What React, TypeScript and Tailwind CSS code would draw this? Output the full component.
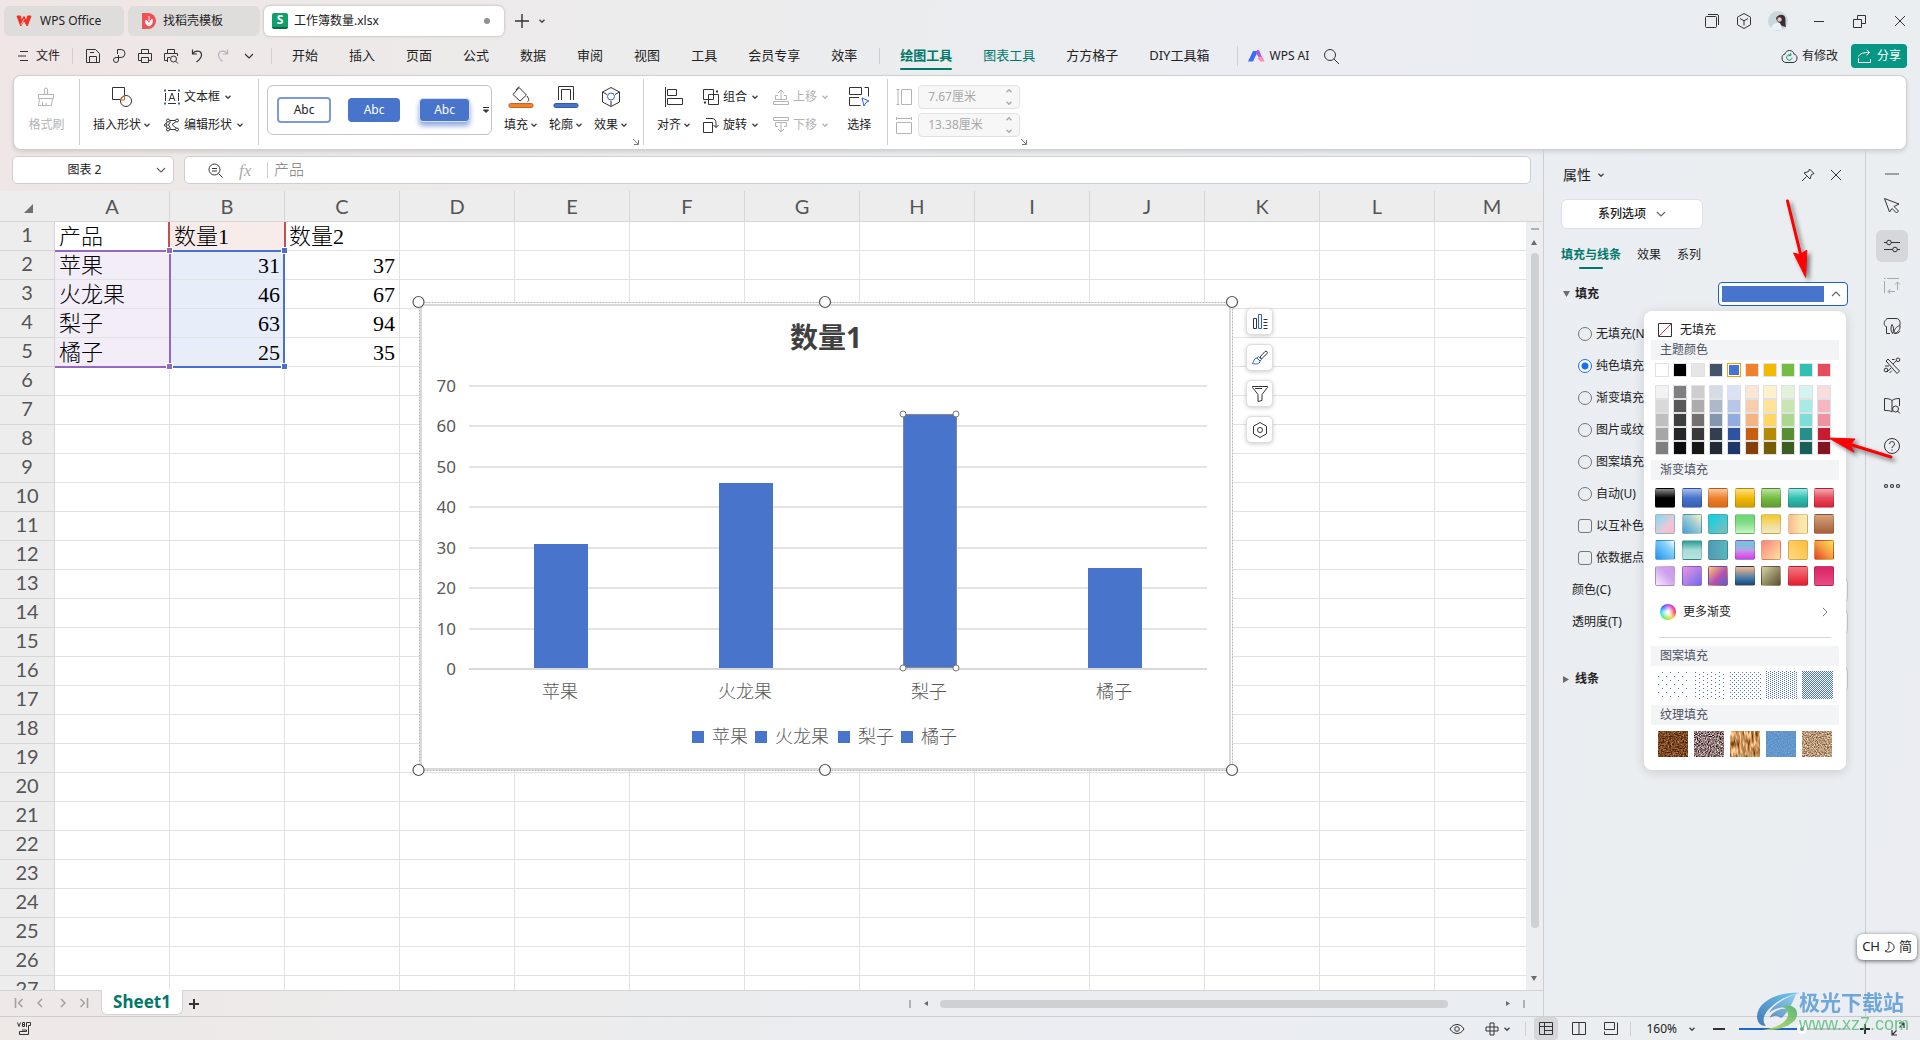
import React from "react";
import type { ReactNode } from "react";

const UI = "font-['Noto_Sans','Noto_Sans_CJK_SC',sans-serif]";

function Ico({ w = 20, h, c = "#333", s = 1, children }: { w?: number; h?: number; c?: string; s?: number; children: ReactNode }) {
  const hh = h ?? w;
  return (
    <svg width={w} height={hh} viewBox={`0 0 ${w} ${hh}`} fill="none" stroke={c} strokeWidth={s} strokeLinejoin="round" className="shrink-0" aria-hidden="true">
      {children}
    </svg>
  );
}

function Chev({ c = "#444", up = false }: { c?: string; up?: boolean }) {
  return (
    <Ico w={8} c={c} s={1.4}>
      <path d={up ? "M1.5 5.2L4 2.8l2.5 2.4" : "M1.5 2.8L4 5.2l2.5-2.4"} />
    </Ico>
  );
}

function BigChev({ c = "#666", up = false }: { c?: string; up?: boolean }) {
  return (
    <Ico w={10} c={c} s={1.1}>
      <path d={up ? "M1 7l4-4 4 4" : "M1 3l4 4 4-4"} />
    </Ico>
  );
}

function VLine({ h = "h-4" }: { h?: string }) {
  return <span className={`w-px shrink-0 bg-[#cfcfd3] ${h}`} />;
}

/* ---------- title bar ---------- */

function TitleBar() {
  return (
    <header className="flex h-10 items-center pl-1 pt-0.5 text-xs">
      <button className="flex h-[30px] w-[120px] items-center gap-2 rounded-md bg-[#dfdcdc] pl-3">
        <svg width="16" height="12" viewBox="0 0 16 12" aria-hidden="true">
          <path d="M1 1h3.500L5.500 6 8 1.500 10.500 6l1-5H15l-3.800 10L8 5.500 4.800 11z" fill="#f3301f" stroke="#f3301f" strokeLinejoin="round" />
          <path d="M8 4.200L5.200 9.500" stroke="#fff" strokeWidth=".8" />
        </svg>
        WPS Office
      </button>
      <button className="ml-1 flex h-[30px] w-[132px] items-center gap-[7px] rounded-md bg-[#dfdcdc] pl-3.5">
        <svg width="14" height="16" viewBox="0 0 14 16" aria-hidden="true">
          <path d="M0 0h6a8 8 0 010 16H0z" fill="#ee5258" />
          <path d="M7 13c-3-1-4-3-3-6 2 1 3 3 3 6zm0 0c3-1 4-4 3-7-2 2-3 4-3 7zM7 8V3" fill="#fff" stroke="#fff" strokeWidth=".8" />
        </svg>
        找稻壳模板
      </button>
      <button className="ml-1 flex h-[30px] w-[240px] items-center rounded-md bg-white pl-2 shadow-[0_0_3px_rgba(0,0,0,0.28)]">
        <span className="mr-1.5 flex size-4 items-center justify-center rounded-[2px] border-b-2 border-[#0b6b45] bg-[#11a06b] text-xs leading-none font-bold text-white">S</span>
        <span>工作簿数量.xlsx</span>
        <span className="mr-3.5 ml-auto size-1.5 rounded-full bg-[#909090]" />
      </button>
      <button aria-label="新建" className="ml-2.5">
        <Ico w={16} s={1.4}><path d="M8 1v14M1 8h14" /></Ico>
      </button>
      <button aria-label="标签列表" className="ml-2"><Chev /></button>
      <div className="mr-3.5 ml-auto flex items-center">
        <button aria-label="窗口" className="mr-[15px]">
          <Ico w={16}><rect x="1.5" y="3.5" width="11" height="11" rx="1" /><path d="M4 1.5h9a1.5 1.5 0 011.500 1.500v9" /></Ico>
        </button>
        <button aria-label="工作台" className="mr-[15px]">
          <Ico w={18}><path d="M9 1.500l6.500 3.700v7.600L9 16.500l-6.500-3.700V5.200zM5 6.500l4 2.300 4-2.300M9 8.800v4.700" /></Ico>
        </button>
        <svg width="20" height="20" viewBox="0 0 20 20" className="mr-[25px]" aria-hidden="true">
          <circle cx="10" cy="10" r="10" fill="#cbd7dd" />
          <path d="M8 8c0-4 7-6 9-2 1 3 0 6 1 10l-4-1-4-4z" fill="#3c2b33" />
          <circle cx="11.500" cy="8.500" r="2.200" fill="#e6c4b8" />
          <path d="M3 19c0-5 4-8 9-7l2 7z" fill="#e9f2f6" />
        </svg>
        <button aria-label="最小化" className="mr-7"><Ico w={12}><path d="M1 6.500h10" /></Ico></button>
        <button aria-label="还原" className="mr-7">
          <Ico w={13}><rect x=".5" y="4.500" width="8" height="8" /><path d="M4.500 4V.5h8v8H9" /></Ico>
        </button>
        <button aria-label="关闭"><Ico w={12}><path d="M1 1l10 10M11 1L1 11" /></Ico></button>
      </div>
    </header>
  );
}

/* ---------- menu bar ---------- */

const MENUS = ["开始", "插入", "页面", "公式", "数据", "审阅", "视图", "工具", "会员专享", "效率"];

function MenuBar() {
  return (
    <nav className="mb-[3px] flex h-8 items-center pl-[18px] text-[13px] whitespace-nowrap">
      <button className="flex items-center gap-2 text-xs">
        <Ico w={10} h={12}><path d="M2 1.500h8M0 6h8M2 10.500h8" /></Ico>
        文件
      </button>
      <span className="mr-3 ml-3"><VLine h="block h-4" /></span>
      <div className="flex items-center gap-2.5">
        <button aria-label="保存"><Ico w={16}><path d="M1.500 1.500h9l4 4v9h-13zM4.500 14V8.500h7V14M5 4.500h4" /></Ico></button>
        <button aria-label="输出为PDF"><Ico w={16}><path d="M6.500 6V1.500H10a4 4 0 010 8H5a2.500 2.500 0 102.500 2.500V7" /></Ico></button>
        <button aria-label="打印"><Ico w={16}><path d="M4.500 5V1.500h7V5M4 12.500H1.500V5.500h13v7H12" /><rect x="4.500" y="9.500" width="7" height="5" /></Ico></button>
        <button aria-label="打印预览"><Ico w={16}><path d="M4.500 5V1.500h7V5M4 12.500H1.500V5.500h13V8M4.500 14V9.500H7" /><circle cx="10.500" cy="11" r="3" /><path d="M12.800 13.200l2.200 2.300" /></Ico></button>
        <button aria-label="撤销"><Ico w={16} s={1.2}><path d="M3.500 1.500v4.500h4.500M3.800 5.800C6 2 12.500 2 12.500 7c0 3-2.500 5-5 7" /></Ico></button>
        <button aria-label="恢复"><Ico w={16} c="#b5b5b8" s={1.2}><path d="M12.500 1.500v4.500H8M12.200 5.800C10 2 3.500 2 3.500 7c0 3 2 4.500 4 6.500" /></Ico></button>
        <button aria-label="更多命令" className="ml-[3px]"><BigChev c="#333" /></button>
      </div>
      <span className="mr-5 ml-[17px]"><VLine h="block h-4" /></span>
      <div className="flex gap-[31px]">
        {MENUS.map((m) => <button key={m}>{m}</button>)}
      </div>
      <span className="mr-5 ml-[22px]"><VLine h="block h-4" /></span>
      <div className="flex items-center gap-[31px]">
        <button className="relative h-7 font-bold text-[#00786a]">
          绘图工具
          <span className="absolute inset-x-0 bottom-0 h-0.5 rounded bg-[#00786a]" />
        </button>
        <button className="text-[#00786a]">图表工具</button>
        <button>方方格子</button>
        <button>DIY工具箱</button>
      </div>
      <span className="mr-2.5 ml-7"><VLine h="block h-5" /></span>
      <button className="flex items-center gap-1 text-xs">
        <svg width="17" height="12" viewBox="0 0 17 12" aria-hidden="true">
          <path d="M5 1h5L5 11.500H0z" fill="#3d6cf5" />
          <path d="M9 0h2l3 7h-3.500L8 3z" fill="#a15cf0" />
          <path d="M9.500 8.500l2-2 3.500 1 1.500 4h-4z" fill="#ff8fb4" />
        </svg>
        WPS AI
      </button>
      <button aria-label="搜索" className="ml-3.5"><Ico w={17}><circle cx="7" cy="7" r="5.500" /><path d="M11 11l5 5" /></Ico></button>
      <div className="mr-[13px] ml-auto flex items-center text-xs">
        <button className="mr-[13px] flex items-center gap-1">
          <Ico w={17} h={15}><path d="M8.500 1.500c2.500 0 4 1.500 4.500 3.500 2 .6 3 2 3 4 0 2.500-1.500 4.500-4 4.500H5c-2.500 0-4-2-4-4.500 0-2 1-3.400 3-4 .5-2 2-3.500 4.500-3.500z" /><path d="M11 8.500a2.700 2.700 0 11-1.500-2.400M9.500 4l.5 2.300-2.300.6" stroke="#0a9a6d" /></Ico>
          有修改
        </button>
        <button className="flex h-6 items-center gap-[5px] rounded bg-[#069684] px-1.5 text-white">
          <Ico w={15} h={14} c="#fff"><path d="M1.500 9v4.500h12V10M1.500 7.500C3 4 7 3.500 12.500 3.500M9.500.8l3.200 2.700-3.200 2.700" /></Ico>
          分享
        </button>
      </div>
    </nav>
  );
}

/* ---------- ribbon ---------- */

function Big({ icon, text, arrow = true, dim = false }: { icon: ReactNode; text: string; arrow?: boolean; dim?: boolean }) {
  return (
    <button className={`flex flex-col items-center ${dim ? "text-[#b4b4b4]" : ""}`}>
      <span className="flex h-7 items-center">{icon}</span>
      <span className="flex h-7 items-center gap-0.5">{text}{arrow && <Chev />}</span>
    </button>
  );
}

function Small({ icon, text, dim = false }: { icon: ReactNode; text: string; dim?: boolean }) {
  return (
    <button className={`flex h-7 items-center gap-1 ${dim ? "text-[#b4b4b4]" : ""}`}>
      {icon}{text}<Chev c={dim ? "#b4b4b4" : "#444"} />
    </button>
  );
}

function Launcher() {
  return (
    <button aria-label="更多选项" className="mb-1 self-end">
      <Ico w={7} c="#777"><path d="M1 1l5 5M6.500 2v4.500H2" /></Ico>
    </button>
  );
}

function SizeInput({ label, value, icon }: { label: string; value: string; icon: ReactNode }) {
  return (
    <label className="flex h-7 items-center gap-[5px]">
      {icon}
      <span className="flex h-6 w-[102px] items-center rounded border border-[#e2e2e2] bg-[#f7f7f7] pr-1.5 pl-[9px]">
        <input aria-label={label} disabled defaultValue={value} className="w-full min-w-0 text-[#a8a8a8]" />
        <span className="flex flex-col gap-1">
          <Chev c="#aaa" up />
          <Chev c="#aaa" />
        </span>
      </span>
    </label>
  );
}

function Ribbon() {
  const g = "#b4b4b4";
  return (
    <section className="mx-[13px] flex h-[75px] shrink-0 rounded-lg border border-[#cfd0d3] bg-white pt-[7px] text-xs whitespace-nowrap shadow-[0_2px_4px_rgba(0,0,0,0.12)]">
      <div className="flex w-[65px] justify-center">
        <Big dim arrow={false} text="格式刷" icon={<Ico w={20} c={g}><path d="M8.500 7.500V2.500a1.500 1.500 0 013 0v5M2.500 7.500h15v4h-15zM3.500 11.500l-1 7h13l1-7M6.500 18v-3M10 18v-2" /></Ico>} />
      </div>
      <VLine h="-mt-1 h-[66px]" />
      <div className="flex pr-3.5 pl-[13px]">
        <Big text="插入形状" icon={<Ico w={22}><circle cx="15" cy="15" r="5.500" /><path d="M9 13.500H1.500v-12h12V9" /><path d="M9.500 14a5 5 0 014-4v4z" stroke="#d2622a" /></Ico>} />
        <div className="ml-[13px]">
          <Small text="文本框" icon={<Ico w={16}><path d="M4 1.500h8M4 14.500h8M1.500 4v8M14.500 4v8M5 12l3-8 3 8M6 9.500h4" /><path d="M0 1.500h2M0 14.500h2M14 1.500h2M14 14.500h2" stroke="#2f5fe0" strokeWidth="2" /></Ico>} />
          <Small text="编辑形状" icon={<Ico w={16}><path d="M13 4L8 7.500 13 12M4 3.500h7M4 12.500h7M3 5L1.500 8 3 11M6.500 4.500L4.500 8l2 3.500" /><circle cx="4" cy="3.500" r="1.500" fill="#fff" /><circle cx="13" cy="3.500" r="1.500" fill="#fff" /><circle cx="4" cy="12.500" r="1.500" fill="#fff" /><circle cx="13" cy="12.500" r="1.500" fill="#fff" /><circle cx="1.800" cy="8" r="1.300" fill="#fff" /></Ico>} />
        </div>
      </div>
      <VLine h="-mt-1 h-[66px]" />
      <div className="ml-2 mt-0.5 flex h-[50px] w-[225px] items-center rounded-md border border-[#c4c4c4] pl-[9px]">
        <button className="h-[26px] w-[54px] rounded border-2 border-[#7b9ade]">Abc</button>
        <button className="ml-[17px] h-6 w-[52px] rounded bg-[#4874cb] text-white">Abc</button>
        <button className="ml-[19px] h-6 w-[51px] rounded border border-[#d6e0f5] bg-[#4874cb] text-white shadow-[0_4px_5px_rgba(72,116,203,0.6)]">Abc</button>
        <button aria-label="更多样式" className="ml-3"><Ico w={8}><path d="M1 1.500h6" /><path d="M1.500 4h5L4 6.500z" fill="#333" /></Ico></button>
      </div>
      <div className="ml-3 flex gap-[11px]">
        <Big text="填充" icon={<Ico w={26} h={24}><path d="M11 2.500l7.500 7.500-6.500 6-7-6.500zM8 5l3-3.500M19 11c2 3 2.500 5 .5 5.500" /><rect x="1" y="18.500" width="24" height="4" rx="1.500" fill="#ee822f" stroke="#c8631a" /></Ico>} />
        <Big text="轮廓" icon={<Ico w={26} h={24}><path d="M5.500 15V1.500h15V15M8.500 15V4.500h9V15" /><rect x="1" y="18.500" width="24" height="4" rx="1.500" fill="#4874cb" stroke="#34599f" /></Ico>} />
        <Big text="效果" icon={<Ico w={22}><path d="M11 1.500L19.500 6v10L11 20.500 2.500 16V6zM2.500 6l4.500 2.500M19.500 6L15 8.500M11 20v-5" /><circle cx="11" cy="10.500" r="3.500" stroke="#2f5fe0" /></Ico>} />
      </div>
      <span className="ml-1 flex"><Launcher /></span>
      <VLine h="-mt-1 ml-1 h-[66px]" />
      <div className="flex pr-[16px] pl-[13px]">
        <Big text="对齐" icon={<Ico w={20}><path d="M1.500 0v20M3.500 2.500h9v6h-9zM3.500 11.500h15v6h-15z" /></Ico>} />
        <div className="ml-3">
          <Small text="组合" icon={<Ico w={16}><rect x=".5" y=".5" width="10" height="10" /><rect x="5.500" y="5.500" width="10" height="10" /><path d="M13 2.500h2M1 13.500h2" strokeWidth="2" /></Ico>} />
          <Small text="旋转" icon={<Ico w={16}><rect x=".5" y="5.500" width="9" height="10" /><path d="M3 1.500h6c3 0 4 2 4 5v4M10.500 8l2.500 2.500L15.500 8" /></Ico>} />
        </div>
        <div className="ml-3.5">
          <Small dim text="上移" icon={<Ico w={16} c={g}><path d="M8 1v9M5 4l3-3 3 3M5 6.500H2.500v4h11v-4H11M.5 12.500h15v3H.5z" /></Ico>} />
          <Small dim text="下移" icon={<Ico w={16} c={g}><path d="M8 15V6M5 12l3 3 3-3M5 9.500H2.500v-4h11v4H11M.5.5h15v3H.5z" /></Ico>} />
        </div>
        <div className="ml-[18px]">
          <Big arrow={false} text="选择" icon={<Ico w={22}><path d="M1.500 1.500h12v7h-12zM1.500 11.500h9M1.500 11.500v8h11M1.500 11.500H11M16.500 1.500h4v9" /><path d="M14 12l7 3-3 1.500-2 3.500z" stroke="#2f5fe0" /></Ico>} />
        </div>
      </div>
      <VLine h="-mt-1 h-[66px]" />
      <div className="ml-2">
        <SizeInput label="高度" value="7.67厘米" icon={<Ico w={17} h={18} c={g}><rect x="5.500" y="1.500" width="10" height="15" /><path d="M2 1.500v15M.5 1.500h3M.5 16.500h3" /></Ico>} />
        <SizeInput label="宽度" value="13.38厘米" icon={<Ico w={17} h={18} c={g}><rect x=".5" y="6.500" width="15" height="11" /><path d="M.5 2.500h15M.5 1v3M15.500 1v3" /></Ico>} />
      </div>
      <Launcher />
    </section>
  );
}

/* ---------- formula bar ---------- */

function FormulaBar() {
  return (
    <div className="flex h-[41px] shrink-0 gap-2.5 pt-1.5 pr-3 pb-[7px] pl-3 text-xs">
      <div className="flex w-[162px] items-center rounded-[5px] border border-[#cfcfd1] bg-white pr-[7px]">
        <input aria-label="名称框" defaultValue="图表 2" className="w-full min-w-0 text-center" />
        <BigChev />
      </div>
      <div className="flex flex-1 items-center rounded-[5px] border border-[#cfcfd1] bg-white pl-[23px]">
        <Ico w={15}><circle cx="6.500" cy="6.500" r="5.500" /><path d="M10.500 10.500l4 4M4 5.500h5M4 8h5" /></Ico>
        <span className="ml-4 w-4 font-['Liberation_Serif',serif] text-[17px] leading-none text-[#aaa] italic">fx</span>
        <span className="mr-1.5 ml-3 h-4 w-px bg-[#cfcfcf]" />
        <input aria-label="编辑栏" defaultValue="产品" className="flex-1 pb-1 text-[15px] leading-none font-light text-[#777]" />
      </div>
    </div>
  );
}

/* ---------- sheet ---------- */

const COLS = "ABCDEFGHIJKLM".split("");
const CELLS: Record<number, string[]> = {
  1: ["产品", "数量1", "数量2"],
  2: ["苹果", "31", "37"],
  3: ["火龙果", "46", "67"],
  4: ["梨子", "63", "94"],
  5: ["橘子", "25", "35"],
};

function cellClass(r: number, c: number) {
  let k = "h-[29px] border-r border-b border-[#e2e2e2] px-1 pt-0.5 pb-0 leading-[26px] font-light whitespace-nowrap ";
  if (r > 1 && c > 0) k += "text-right ";
  if (c === 0 && r > 1 && r < 6) k += "bg-[#f3edf8]";
  else if (c === 1 && r > 1 && r < 6) k += "bg-[#e8edfa]";
  else if (c === 1 && r === 1) k += "bg-[#f8eceb]";
  return k;
}

function Handle({ cls }: { cls: string }) {
  return <span className={`absolute size-[7px] border border-white ${cls}`} />;
}

function Sheet() {
  return (
    <div className="relative min-w-0 flex-1 overflow-hidden bg-white">
      <table className="w-[1550px] table-fixed border-separate border-spacing-0">
        <colgroup>
          <col className="w-[55px]" />
          {COLS.map((c) => <col key={c} className="w-[115px]" />)}
        </colgroup>
        <thead>
          <tr className="bg-[#ededee] font-['Lato',sans-serif] text-xl text-[#555]">
            <th className="h-[31px] border-b border-[#d6d6d6] p-0">
              <svg width="9" height="9" className="mt-1 ml-6" aria-hidden="true"><path d="M9 0v9H0z" fill="#707070" /></svg>
            </th>
            {COLS.map((c) => (
              <th key={c} className="h-[31px] border-r border-b border-[#d6d6d6] p-0 font-normal">{c}</th>
            ))}
          </tr>
        </thead>
        <tbody>
          {Array.from({ length: 27 }, (_, i) => i + 1).map((r) => (
            <tr key={r} className="font-['Liberation_Serif','Noto_Sans_CJK_SC',serif] text-[22px] text-black">
              <th className="h-[29px] border-r border-b border-[#d6d6d6] bg-[#ededee] p-0 align-top font-['Lato',sans-serif] text-xl leading-6 font-normal text-[#555]">{r}</th>
              {COLS.map((c, ci) => (
                <td key={c} className={cellClass(r, ci)}>{CELLS[r]?.[ci] ?? ""}</td>
              ))}
            </tr>
          ))}
        </tbody>
      </table>
      <div className="absolute top-[31px] left-[168px] h-7 w-[118px] border-x-2 border-[#c4504f]" />
      <div className="absolute top-[59px] left-[169px] h-[118px] w-[116px] border-2 border-[#4a6fd0]" />
      <div className="absolute top-[59px] left-[55px] h-[118px] w-[116px] border-2 border-l-0 border-[#9467c0]" />
      <Handle cls="top-[56px] left-[166px] bg-[#9467c0]" />
      <Handle cls="top-[172px] left-[166px] bg-[#9467c0]" />
      <Handle cls="top-[56px] left-[281px] bg-[#4a6fd0]" />
      <Handle cls="top-[172px] left-[281px] bg-[#4a6fd0]" />
      <div className="absolute top-[103px] left-[412px]"><Chart /></div>
      <ChartButtons />
    </div>
  );
}

const BARS = [
  { name: "苹果", v: 31 },
  { name: "火龙果", v: 46 },
  { name: "梨子", v: 63 },
  { name: "橘子", v: 25 },
];
const LEGEND_X = [280, 343, 426, 489];
const BASE = 375;
const yOf = (v: number) => Math.round(BASE - (v * 283) / 70);

function Chart() {
  return (
    <svg width="828" height="484" viewBox="0 0 828 484" className="block font-['Noto_Sans','Noto_Sans_CJK_SC',sans-serif]" role="img" aria-label="数量1">
      <rect x="7.500" y="8.500" width="813" height="468" fill="#fff" stroke="#b8b8b8" strokeDasharray="2 1" />
      <rect x="9" y="11" width="809" height="464" fill="#fff" stroke="#d9d9d9" strokeWidth="2" />
      <text x="414" y="54" textAnchor="middle" fontSize="28" fontWeight="700" fill="#404040">数量1</text>
      {[0, 10, 20, 30, 40, 50, 60, 70].map((t) => (
        <g key={t}>
          <rect x="57" y={yOf(t) - 1} width="738" height="2" fill={t === 0 ? "#d9d9d9" : "#e4e4e4"} />
          <text x="44" y={yOf(t) + 6} textAnchor="end" fontSize="17" fill="#595959">{t}</text>
        </g>
      ))}
      {BARS.map((b, i) => {
        const cx = 149 + Math.round(i * 184.5);
        return (
          <g key={b.name}>
            <rect x={cx - 27} y={yOf(b.v)} width="54" height={BASE - 1 - yOf(b.v)} fill="#4874cb" />
            <text x={cx - 1} y={BASE + 29} textAnchor="middle" fontSize="18" fontWeight="300" fill="#595959">{b.name}</text>
            <rect x={LEGEND_X[i]} y="437" width="12" height="12" fill="#4874cb" />
            <text x={LEGEND_X[i] + 20} y="449" fontSize="18" fontWeight="300" fill="#595959">{b.name}</text>
          </g>
        );
      })}
      <rect x="491.500" y="120.500" width="53" height="253" fill="none" stroke="#7f8799" />
      {[[491, 120], [544, 120], [491, 374], [544, 374]].map(([x, y]) => (
        <circle key={`${x}-${y}`} cx={x} cy={y} r="3" fill="#fff" stroke="#777" />
      ))}
      {[[6.500, 8], [413, 8], [820, 8], [6.500, 476], [413, 476], [820, 476]].map(([x, y]) => (
        <circle key={`${x}-${y}`} cx={x} cy={y} r="5.500" fill="#fff" stroke="#555" strokeWidth="1.200" />
      ))}
    </svg>
  );
}

function ChartButtons() {
  const k = "flex size-[27px] items-center justify-center rounded-[5px] border border-[#dedede] bg-white shadow-[0_1px_4px_rgba(0,0,0,0.2)]";
  return (
    <div className="absolute top-[117px] left-[1246px] flex flex-col gap-[9px]">
      <button aria-label="图表元素" className={k}><Ico w={16}><path d="M1.500 4.500h3v10h-3z" /><path d="M6.500.5h3v14h-3z" stroke="#2f5fe0" /><path d="M11.500 5.500h4M11.500 8.500h4M11.500 11.500h4M11.500 14.500h4" /></Ico></button>
      <button aria-label="图表样式" className={k}><Ico w={16}><path d="M8 7l5-5.500c1.500-1 3 .5 2 2L9.500 9z" /><path d="M6.500 6.500l3 3-1.500 1.500-3-3zM5 8c-3 0-3 3-4.500 5.500C4 14.500 8 14 8 11" stroke="#2f5fe0" /></Ico></button>
      <button aria-label="图表筛选" className={k}><Ico w={16}><path d="M.5.5h15v1L10 8.500v6l-4 1v-7L.5 1.500zM3 2.500h7" /></Ico></button>
      <button aria-label="设置" className={k}><Ico w={16}><path d="M8 .5l6.500 3.700v7.600L8 15.500l-6.500-3.700V4.200z" /><circle cx="8" cy="8" r="2.500" /></Ico></button>
    </div>
  );
}

function Tri({ d }: { d: string }) {
  return <svg width="7" height="7" viewBox="0 0 7 7" className="shrink-0" aria-hidden="true"><path d={d} fill="#6b6b6b" /></svg>;
}

function VScroll() {
  return (
    <div className="flex w-[17px] shrink-0 flex-col items-center bg-[#edeef0] pb-2">
      <span className="h-[31px] w-full border-b border-[#d6d6d6] bg-[#ededee]" />
      <span className="mt-1.5 h-0.5 w-2 bg-[#b0b1b4]" />
      <span className="mt-[9px]"><Tri d="M0 6h6L3 1z" /></span>
      <span className="mt-[7px] mb-[47px] w-2 flex-1 rounded-full bg-[#cfd0d3]" />
      <Tri d="M0 1h6L3 6z" />
    </div>
  );
}

function SheetTabs() {
  const c = "#a2a2a5";
  return (
    <div className="flex h-[26px] shrink-0 border-t border-[#d3d4d7]">
      <div className="flex items-center gap-[11px] pr-3 pb-px pl-3.5">
        <button aria-label="第一张"><Ico w={10} c={c} s={1.6}><path d="M1.500 0v10M8.500 1L4.500 5l4 4" /></Ico></button>
        <button aria-label="上一张"><Ico w={10} c={c} s={1.6}><path d="M7 1L3 5l4 4" /></Ico></button>
        <button aria-label="下一张" className="ml-0.5"><Ico w={10} c={c} s={1.6}><path d="M3 1l4 4-4 4" /></Ico></button>
        <button aria-label="最后一张"><Ico w={10} c={c} s={1.6}><path d="M1.500 1l4 4-4 4M8.500 0v10" /></Ico></button>
      </div>
      <button className="-mt-px h-[25px] w-[82px] rounded-b-md border border-t-0 border-[#d3d4d7] bg-white text-[17px] leading-6 font-bold text-[#00786a]">Sheet1</button>
      <button aria-label="新建工作表" className="ml-1.5"><Ico w={10} s={2}><path d="M5 0v10M0 5h10" /></Ico></button>
      <div className="ml-auto flex w-[634px] items-center">
        <span className="h-2 w-0.5 bg-[#b0b1b4]" />
        <span className="ml-3"><Tri d="M5 1v5L1 3.500z" /></span>
        <span className="ml-2.5 h-2 w-[508px] rounded-full bg-[#cfd0d3]" />
        <span className="ml-auto"><Tri d="M2 1v5l4-2.500z" /></span>
        <span className="mr-[18px] ml-3 h-2 w-0.5 bg-[#b0b1b4]" />
      </div>
    </div>
  );
}

/* ---------- fill popup ---------- */

const THEME = ["bg-white", "bg-black", "bg-[#e6e6e6]", "bg-[#44546a]", "bg-[#4874cb]", "bg-[#ee822f]", "bg-[#f2ba02]", "bg-[#75bd42]", "bg-[#30c0b4]", "bg-[#e54c5e]"];
const TINTS = [
  ["bg-[#f2f2f2]", "bg-[#7f7f7f]", "bg-[#cfcdcd]", "bg-[#d6dce5]", "bg-[#dae3f5]", "bg-[#fce6d5]", "bg-[#fff1cb]", "bg-[#e3f2d9]", "bg-[#d3f4f1]", "bg-[#fadbdf]"],
  ["bg-[#d9d9d9]", "bg-[#595959]", "bg-[#aeabab]", "bg-[#adb9ca]", "bg-[#b6c7ea]", "bg-[#f8cdac]", "bg-[#fee398]", "bg-[#c8e5b3]", "bg-[#a8eae4]", "bg-[#f5b7bf]"],
  ["bg-[#bfbfbf]", "bg-[#3f3f3f]", "bg-[#757070]", "bg-[#8497b0]", "bg-[#91ace0]", "bg-[#f5b482]", "bg-[#fed664]", "bg-[#acd78e]", "bg-[#7cdfd7]", "bg-[#ef949e]"],
  ["bg-[#a6a6a6]", "bg-[#262626]", "bg-[#3a3838]", "bg-[#333f50]", "bg-[#2e54a1]", "bg-[#c65f10]", "bg-[#b58b02]", "bg-[#588e32]", "bg-[#249087]", "bg-[#c81d31]"],
  ["bg-[#7f7f7f]", "bg-[#0d0d0d]", "bg-[#171616]", "bg-[#222a35]", "bg-[#1f386b]", "bg-[#843f0b]", "bg-[#795d01]", "bg-[#3a5f21]", "bg-[#18605a]", "bg-[#851321]"],
];
const GRADS = [
  "bg-[linear-gradient(#8c8c8c,#000_50%)]", "bg-[linear-gradient(#a9bde8,#4874cb_50%,#345fb5)]", "bg-[linear-gradient(#f9c79f,#ee822f_50%,#db6710)]", "bg-[linear-gradient(#fbe08a,#f2ba02_50%,#cf9f00)]", "bg-[linear-gradient(#bce2a1,#75bd42_50%,#5f9c34)]", "bg-[linear-gradient(#a5e9e3,#30c0b4_50%,#259a90)]", "bg-[linear-gradient(#f3a8b1,#e54c5e_50%,#dc1f36)]",
  "bg-[linear-gradient(135deg,#78e0f2,#e9c8da_60%,#ffb8c8)]", "bg-[linear-gradient(45deg,#3f9fe0,#a5cfd0_60%,#fff0c0)]", "bg-[linear-gradient(135deg,#00d4ee,#8fb9b0)]", "bg-[linear-gradient(#6fd474,#7ddc82_40%,#c9f5c4)]", "bg-[linear-gradient(#f6c922,#f2de9a_60%,#efe9c4)]", "bg-[linear-gradient(90deg,#fdba90,#f9e3a8_60%,#f8f0a8)]", "bg-[linear-gradient(#d6a37f,#a5603a)]",
  "bg-[linear-gradient(45deg,#1d93f0,#8ed4f8_70%,#fff)]", "bg-[linear-gradient(#2a9c93,#a7dcd6_50%,#b9e4de)]", "bg-[linear-gradient(90deg,#5398b5,#57b8bb)]", "bg-[linear-gradient(#56d4d8,#b6a2e6_50%,#f42cf0)]", "bg-[linear-gradient(135deg,#ff8088,#ffb48c_50%,#ffe2a0)]", "bg-[linear-gradient(45deg,#ffd98a,#fbbe30)]", "bg-[linear-gradient(45deg,#e83a28,#f39c42_50%,#fbe650)]",
  "bg-[linear-gradient(45deg,#f5ecfb,#cfa1ee_60%,#cc9cf0)]", "bg-[linear-gradient(135deg,#ec94dc,#a97fe8_55%,#6c68f2)]", "bg-[linear-gradient(135deg,#f8d068,#b84fb0_55%,#4a66d4)]", "bg-[linear-gradient(#f7b787,#4f7ca8_60%,#0c4a84)]", "bg-[linear-gradient(135deg,#d8d4a8,#8f8860_55%,#5c5236)]", "bg-[linear-gradient(#f27a80,#ee4a55_50%,#e61b30)]", "bg-[linear-gradient(#dc2464,#e64c86)]",
];

function Band({ children }: { children: ReactNode }) {
  return <h3 className="mx-[7px] h-5 bg-[#f3f4f6] pl-[9px] leading-[19px] text-[#4b5262]">{children}</h3>;
}

const PATTERNS: { s: number; dots: number[][] }[] = [
  { s: 8, dots: [[0, 5], [4, 1]] },
  { s: 8, dots: [[1, 1], [1, 5], [5, 3], [5, 7]] },
  { s: 4, dots: [[0, 1], [2, 3]] },
  { s: 4, dots: [[0, 0], [2, 1], [0, 2], [2, 3]] },
  { s: 4, dots: [[0, 0], [2, 0], [1, 1], [3, 1], [0, 2], [2, 2], [1, 3], [3, 3]] },
];

const TEXTURES = [
  { rgb: [0.48, 0.28, 0.14], amp: 0.8, f: "0.6 0.7", name: "胡桃" },
  { rgb: [0.55, 0.46, 0.46], amp: 1.7, f: "0.9 0.9", name: "花岗岩" },
  { rgb: [0.78, 0.57, 0.36], amp: 1.1, f: "0.5 0.12", name: "编织物" },
  { rgb: [0.39, 0.59, 0.8], amp: 0.2, f: "0.8 0.8", name: "蓝色纸" },
  { rgb: [0.72, 0.6, 0.48], amp: 1.1, f: "0.9 0.9", name: "沙滩" },
];

function textureMatrix(rgb: number[], amp: number) {
  return rgb.map((v) => `${amp} 0 0 0 ${v - amp / 2}`).join(" ") + " 0 0 0 0 1";
}

function FillPopup() {
  return (
    <div className="absolute top-[29px] right-0.5 z-10 w-[202px] rounded-lg bg-white pb-[13px] text-xs shadow-[0_2px_12px_rgba(0,0,0,0.14)]">
      <button className="flex h-[29px] items-center gap-2 pt-2 pl-3.5">
        <Ico w={14}><rect x=".5" y=".5" width="13" height="13" /><path d="M1 13L13 1" stroke="#d8325f" /></Ico>
        无填充
      </button>
      <Band>主题颜色</Band>
      <div className="mt-[3px] flex gap-1 pl-[11px]">
        {THEME.map((c, i) => (
          <button key={c} aria-label={`主题颜色 ${i + 1}`} className={`size-3.5 border ${i === 4 ? "border-[#f5a100] ring-1 ring-white ring-inset" : "border-[#e0e1e5]"} ${c}`} />
        ))}
      </div>
      <div className="mt-2 pl-[11px]">
        {TINTS.map((row, r) => (
          <div key={r} className="flex gap-1">
            {row.map((c, i) => <button key={c + i} aria-label={`颜色 ${r + 1}-${i + 1}`} className={`h-3.5 w-3.5 border border-[#e0e1e5] ${c}`} />)}
          </div>
        ))}
      </div>
      <div className="h-[5px]" />
      <Band>渐变填充</Band>
      <div className="mt-2 grid grid-cols-[repeat(7,20px)] justify-between gap-y-1.5 pr-3 pl-[11px]">
        {GRADS.map((g, i) => <button key={g} aria-label={`渐变 ${i + 1}`} className={`size-5 rounded-[2px] border border-black/15 ${g}`} />)}
      </div>
      <button className="mt-2 flex h-9 w-full items-center gap-[7px] pr-[18px] pl-4">
        <span className="size-4 rounded-full bg-[radial-gradient(#fff_10%,transparent_65%),conic-gradient(#c040ff,#ff3050_25%,#ffd040_40%,#60f060_60%,#30e0ff_75%,#3060ff_88%,#c040ff)]" />
        更多渐变
        <span className="ml-auto"><Ico w={6} h={10} c="#777"><path d="M.8.800l4.200 4.200L.8 9.200" /></Ico></span>
      </button>
      <hr className="mx-[15px] mt-[7px] mb-2 border-[#d4d4d6]" />
      <Band>图案填充</Band>
      <div className="mt-[5px] mb-[6px] flex justify-between pr-[13px] pl-3.5">
        {PATTERNS.map((p, i) => (
          <button key={i} aria-label={`图案 ${i + 1}`}>
            <svg width="31" height="28" className="block" aria-hidden="true">
              <pattern id={`pt${i}`} width={p.s} height={p.s} patternUnits="userSpaceOnUse">
                {p.dots.map(([x, y]) => <rect key={`${x}${y}`} x={x} y={y} width="1" height="1" fill="#4874cb" />)}
              </pattern>
              <rect width="31" height="28" fill={`url(#pt${i})`} />
            </svg>
          </button>
        ))}
      </div>
      <Band>纹理填充</Band>
      <div className="mt-1.5 flex gap-1.5 pl-3.5">
        {TEXTURES.map((t, i) => (
          <button key={t.name} aria-label={t.name}>
            <svg width="30" height="26" className="block" aria-hidden="true">
              <filter id={`tx${i}`} x="0" y="0" width="100%" height="100%" colorInterpolationFilters="sRGB">
                <feTurbulence type="fractalNoise" baseFrequency={t.f} numOctaves="2" seed={i + 3} />
                <feColorMatrix values={textureMatrix(t.rgb, t.amp)} />
              </filter>
              <rect width="30" height="26" filter={`url(#tx${i})`} />
            </svg>
          </button>
        ))}
      </div>
    </div>
  );
}

/* ---------- property panel ---------- */

const RADIOS = ["无填充(N)", "纯色填充(S)", "渐变填充(G)", "图片或纹理填充(P)", "图案填充(A)", "自动(U)"];
const CHECKS = ["以互补色代表负值(I)", "依数据点着色(V)"];

function Panel() {
  return (
    <aside className="flex w-[322px] shrink-0 flex-col border-l border-[#cdced2] text-xs whitespace-nowrap">
      <div className="flex h-[49px] items-center pr-[23px] pl-[19px]">
        <h2 className="flex items-center gap-1.5 text-sm">属性<Chev /></h2>
        <button aria-label="固定" className="mr-[15px] ml-auto"><Ico w={14}><path d="M8.500 1l4.500 4.500-2.500 1-1.500 4.500-6-6 4.500-1.500zM5.500 8.500L1 13" /></Ico></button>
        <button aria-label="关闭"><Ico w={12}><path d="M1 1l10 10M11 1L1 11" /></Ico></button>
      </div>
      <button className="ml-[17px] flex h-[30px] w-[142px] items-center justify-center gap-2.5 rounded-md border border-[#dcdfe5] bg-white font-medium">
        系列选项<BigChev />
      </button>
      <div className="mt-3 flex gap-4 pl-[17px]" role="tablist">
        <button role="tab" aria-selected="true" className="relative h-7 font-bold text-[#00786a]">
          填充与线条
          <span className="absolute bottom-0 left-[18px] h-0.5 w-6 rounded bg-[#00786a]" />
        </button>
        <button role="tab">效果</button>
        <button role="tab">系列</button>
      </div>
      <div className="relative mt-[13px] flex h-6 items-center pl-[19px]">
        <Tri d="M0 0h7L3.500 6z" />
        <h3 className="ml-[5px] font-bold">填充</h3>
        <div className="relative mr-[17px] ml-auto">
          <button aria-label="填充颜色" className="flex h-6 w-[130px] items-center rounded border border-[#1f5fc6] bg-white pl-[3px]">
            <span className="h-4 w-[102px] bg-[#4874cb]" />
            <span className="ml-[7px]"><BigChev up /></span>
          </button>
          <FillPopup />
        </div>
      </div>
      <div className="mt-3 pl-[34px]">
        {RADIOS.map((t, i) => (
          <label key={t} className="flex h-8 items-center gap-1">
            <input type="radio" name="fill" defaultChecked={i === 1} className="size-3.5 appearance-none rounded-full border border-[#777] checked:border-[#1b6ef3] checked:bg-[radial-gradient(circle,#1b6ef3_3px,#fff_4px)]" />
            {t}
          </label>
        ))}
        {CHECKS.map((t) => (
          <label key={t} className="flex h-8 items-center gap-1">
            <input type="checkbox" className="size-3.5 appearance-none rounded-[3px] border border-[#777]" />
            {t}
          </label>
        ))}
      </div>
      <div className="mr-[17px] flex h-8 items-center justify-between pl-7">
        颜色(C)
        <button aria-label="颜色" className="h-6 w-[130px] rounded border border-[#cdced2] bg-white" />
      </div>
      <div className="mr-[17px] flex h-8 items-center justify-between pl-7">
        透明度(T)
        <input aria-label="透明度" className="h-6 w-[130px] rounded border border-[#cdced2] bg-white" />
      </div>
      <div className="mt-[25px] mr-[17px] flex h-8 items-center pl-[19px]">
        <Tri d="M0 0v7l6-3.500z" />
        <h3 className="ml-[5px] font-bold">线条</h3>
        <button aria-label="线条颜色" className="ml-auto h-6 w-[130px] rounded border border-[#cdced2] bg-white" />
      </div>
    </aside>
  );
}

function ToolStrip() {
  return (
    <aside className="flex w-[55px] shrink-0 flex-col items-center border-l border-[#cdced2] pt-4 pr-0.5">
      <button aria-label="收起" className="flex size-4 items-center"><Ico w={16} c="#8a8a8a" s={1.6}><path d="M1 8h14" /></Ico></button>
      <button aria-label="选择" className="mt-2 flex h-8 w-8 items-center justify-center"><Ico w={18}><path d="M1.500 1.500L16 7l-5 2.500 4.500 4.500-2 2L9 11.500 6.500 15z" /></Ico></button>
      <button aria-label="属性" className="mt-2 flex size-8 items-center justify-center rounded-md bg-[#d5d7da]"><Ico w={18}><path d="M1 5.500h3M8 5.500h9M1 12.500h9M14 12.500h3" /><circle cx="6" cy="5.500" r="2.300" /><circle cx="12" cy="12.500" r="2.300" /></Ico></button>
      <button aria-label="转换" className="mt-2 flex size-8 items-center justify-center"><Ico w={18} c="#a6a9ad"><path d="M4 1.500h12M1.500 4v12M1 1.500h1.500M14.500 13V5M12 7.500L14.500 5 17 7.500M12 14.500H5M7.500 12L5 14.500 7.500 17" /></Ico></button>
      <button aria-label="图库" className="mt-2 flex size-8 items-center justify-center"><Ico w={18}><path d="M7 16.500H3.500V9.500C.5 9 .500 5 3 2.500c.5-.7 1-1 2-1h8c3 0 4.500 2.500 4 6.500M9.500 16.500c-2-3-2-6-.5-9 2 2.500 2 6 .5 9zM11 16.500c0-4 2-7 6-8 .5 4-2 7-6 8zM12 16.500c2 0 4-.5 5-2.500" /></Ico></button>
      <button aria-label="智能工具" className="mt-2 flex size-8 items-center justify-center"><Ico w={18}><path d="M3 4l2-2 11.500 12-2.500 2.500zM10 7l4-4M8 11l-4 4" /><circle cx="15" cy="2.800" r="1.800" /><circle cx="3" cy="13" r="1.800" /><path d="M9 2.500h2.500M2 9h4M6.500 16l2.500-2.500" /></Ico></button>
      <button aria-label="查找" className="mt-2 flex size-8 items-center justify-center"><Ico w={18}><path d="M9 15c-2-1.500-4-1.500-7.500-1.500v-12C5 1.500 7 2 9 3.500c2-1.500 4-2 7.500-2V9M9 3.500V15" /><circle cx="12.500" cy="12" r="3" /><path d="M14.500 14l2.500 2.500" /></Ico></button>
      <button aria-label="帮助" className="mt-2 flex size-8 items-center justify-center"><Ico w={18}><circle cx="9" cy="9" r="7.500" /><path d="M6.500 7a2.500 2.500 0 113.500 2.300c-.8.400-1 .8-1 1.700M9 12.500v1.200" /></Ico></button>
      <button aria-label="更多" className="mt-2 flex size-8 items-center justify-center"><Ico w={18} h={6} s={1.2}><circle cx="3" cy="3" r="1.500" /><circle cx="9" cy="3" r="1.500" /><circle cx="15" cy="3" r="1.500" /></Ico></button>
    </aside>
  );
}

/* ---------- status bar ---------- */

function StatusBar() {
  return (
    <footer className="flex h-6 shrink-0 items-center border-t border-[#cdced2] pl-[17px] text-xs">
      <Ico w={15} h={13}><path d="M.5.5L2 4.500 3.500.5M5.500.5v4h2v-4zM5.500 2.500h2M9.500 5V.5h4v3h-2V12.500h-9v-3h7V8H5" /></Ico>
      <div className="mr-[15px] ml-auto flex items-center">
        <button aria-label="护眼模式"><Ico w={16} h={12}><path d="M1 6c3.500-6 10.500-6 14 0-3.500 6-10.500 6-14 0z" /><circle cx="8" cy="6" r="2.300" /></Ico></button>
        <button aria-label="阅读模式" className="ml-5 flex items-center gap-1"><Ico w={14}><path d="M5 5V1h4v4h4v4H9v4H5V9H1V5z" /><path d="M5 5h4v4H5z" /></Ico><Chev /></button>
        <span className="ml-3.5"><VLine h="block h-3.5" /></span>
        <button aria-label="普通视图" className="ml-2 flex h-[23px] w-6 items-center justify-center rounded bg-[#d5d7da]"><Ico w={14} h={13}><path d="M.5.5h13v12H.5zM.5 4.500h13M5.500.5v12M5.500 8.500h8" /></Ico></button>
        <button aria-label="分页预览" className="ml-3.5"><Ico w={14} h={13}><path d="M.5.5h13v12H.5zM7 .5v12" /></Ico></button>
        <button aria-label="页面布局" className="ml-[18px]"><Ico w={14} h={13}><path d="M.5.5h10v7H.5zM.5 9.500v3h10M13.500.5v12h-3" /></Ico></button>
        <span className="ml-3"><VLine h="block h-3.5" /></span>
        <button className="ml-[15px] flex items-center gap-[11px]">160%<Chev /></button>
        <button aria-label="缩小" className="ml-[17px]"><Ico w={12} s={2}><path d="M0 6h12" /></Ico></button>
        <input type="range" aria-label="缩放" defaultValue={59} className="ml-3.5 h-2.5 w-[109px] appearance-none bg-[linear-gradient(90deg,#1f66d0_59%,#c4c6ca_59%)] bg-[length:100%_2px] bg-center bg-no-repeat [&::-webkit-slider-thumb]:size-2.5 [&::-webkit-slider-thumb]:appearance-none [&::-webkit-slider-thumb]:rounded-full [&::-webkit-slider-thumb]:border-[3px] [&::-webkit-slider-thumb]:border-white [&::-webkit-slider-thumb]:bg-[#888]" />
        <button aria-label="放大" className="ml-3"><Ico w={10} s={2}><path d="M5 0v10M0 5h10" /></Ico></button>
        <button aria-label="全屏" className="ml-[21px]"><Ico w={14} s={1.2}><path d="M8 1h5v5M13 1L8.500 5.500M6 13H1V8M1 13l4.500-4.500" /></Ico></button>
      </div>
    </footer>
  );
}

function Watermark() {
  return (
    <div className="pointer-events-none absolute right-[11px] bottom-1.5 flex items-center opacity-85">
      <svg width="46" height="40" viewBox="0 0 44 40" aria-hidden="true">
        <defs>
          <linearGradient id="wb" x1="0" y1="1" x2="1" y2="0"><stop offset="0" stopColor="#2767b0" /><stop offset="1" stopColor="#5cc2f0" /></linearGradient>
          <linearGradient id="wg" x1="0" y1="1" x2="1" y2="0"><stop offset="0" stopColor="#c6dc4a" /><stop offset="1" stopColor="#3fae6a" /></linearGradient>
        </defs>
        <path d="M44 1C26-1 2 8 1 24c0 7 4 10 9 10-4-4-3-12 4-18C22 8 32 3 44 1z" fill="url(#wb)" />
        <path d="M40 2C28 6 16 14 13 21c6-5 14-7 18-4-6-1-16 3-17 9 4-3 8-2 11 0 6-3 12-16 15-24z" fill="url(#wb)" opacity=".8" />
        <path d="M26 14c10-2 16 2 15 9-1 9-16 16-34 15 14-2 24-8 25-15 0-4-2-7-6-9z" fill="url(#wg)" />
      </svg>
      <div className="-ml-0.5 leading-none whitespace-nowrap">
        <div className="text-[21px] leading-6 font-bold text-[#5a9bd8]">极光下载站</div>
        <div className="font-['Liberation_Sans',sans-serif] text-[18px] leading-5 text-[#5cbf7c]">www.xz7.com</div>
      </div>
    </div>
  );
}

function RedArrows() {
  return (
    <svg width="140" height="290" viewBox="0 0 140 290" className="pointer-events-none absolute top-[190px] right-0 z-20 drop-shadow-[3px_3px_2px_rgba(0,0,0,0.5)]" aria-hidden="true">
      <g stroke="#fe0000" fill="#fe0000" strokeLinecap="round">
        <path d="M7.500 11L21 66" strokeWidth="3" />
        <path d="M25.500 87L13.500 63l6 1.500 7-4z" strokeWidth="1" />
        <path d="M111 267L72 255" strokeWidth="3" />
        <path d="M49 248l26 1-5 6 4 7z" strokeWidth="1" />
      </g>
    </svg>
  );
}

export default function App() {
  return (
    <div className={`relative flex h-screen flex-col overflow-hidden bg-[linear-gradient(100deg,#efe6e5_0%,#ececec_32%,#ebedf2_60%,#eaeef1_90%,#ebedf2_100%)] text-[#222] ${UI}`}>
      <TitleBar />
      <MenuBar />
      <Ribbon />
      <div className="flex min-h-0 flex-1">
        <main className="flex min-w-0 flex-1 flex-col">
          <FormulaBar />
          <div className="flex min-h-0 flex-1">
            <Sheet />
            <VScroll />
          </div>
          <SheetTabs />
        </main>
        <Panel />
        <ToolStrip />
      </div>
      <StatusBar />
      <div className="absolute right-[3px] bottom-20 flex h-[26px] items-center gap-1 rounded-md bg-white px-[5px] text-[13px] shadow-[0_1px_4px_rgba(0,0,0,0.6)]">
        CH
        <Ico w={11} h={12}><path d="M4 1c8 1 8 9 1 10-1 0-3 0-4-1C5 9 6 5 4 1z" /></Ico>
        简
      </div>
      <Watermark />
      <RedArrows />
    </div>
  );
}
